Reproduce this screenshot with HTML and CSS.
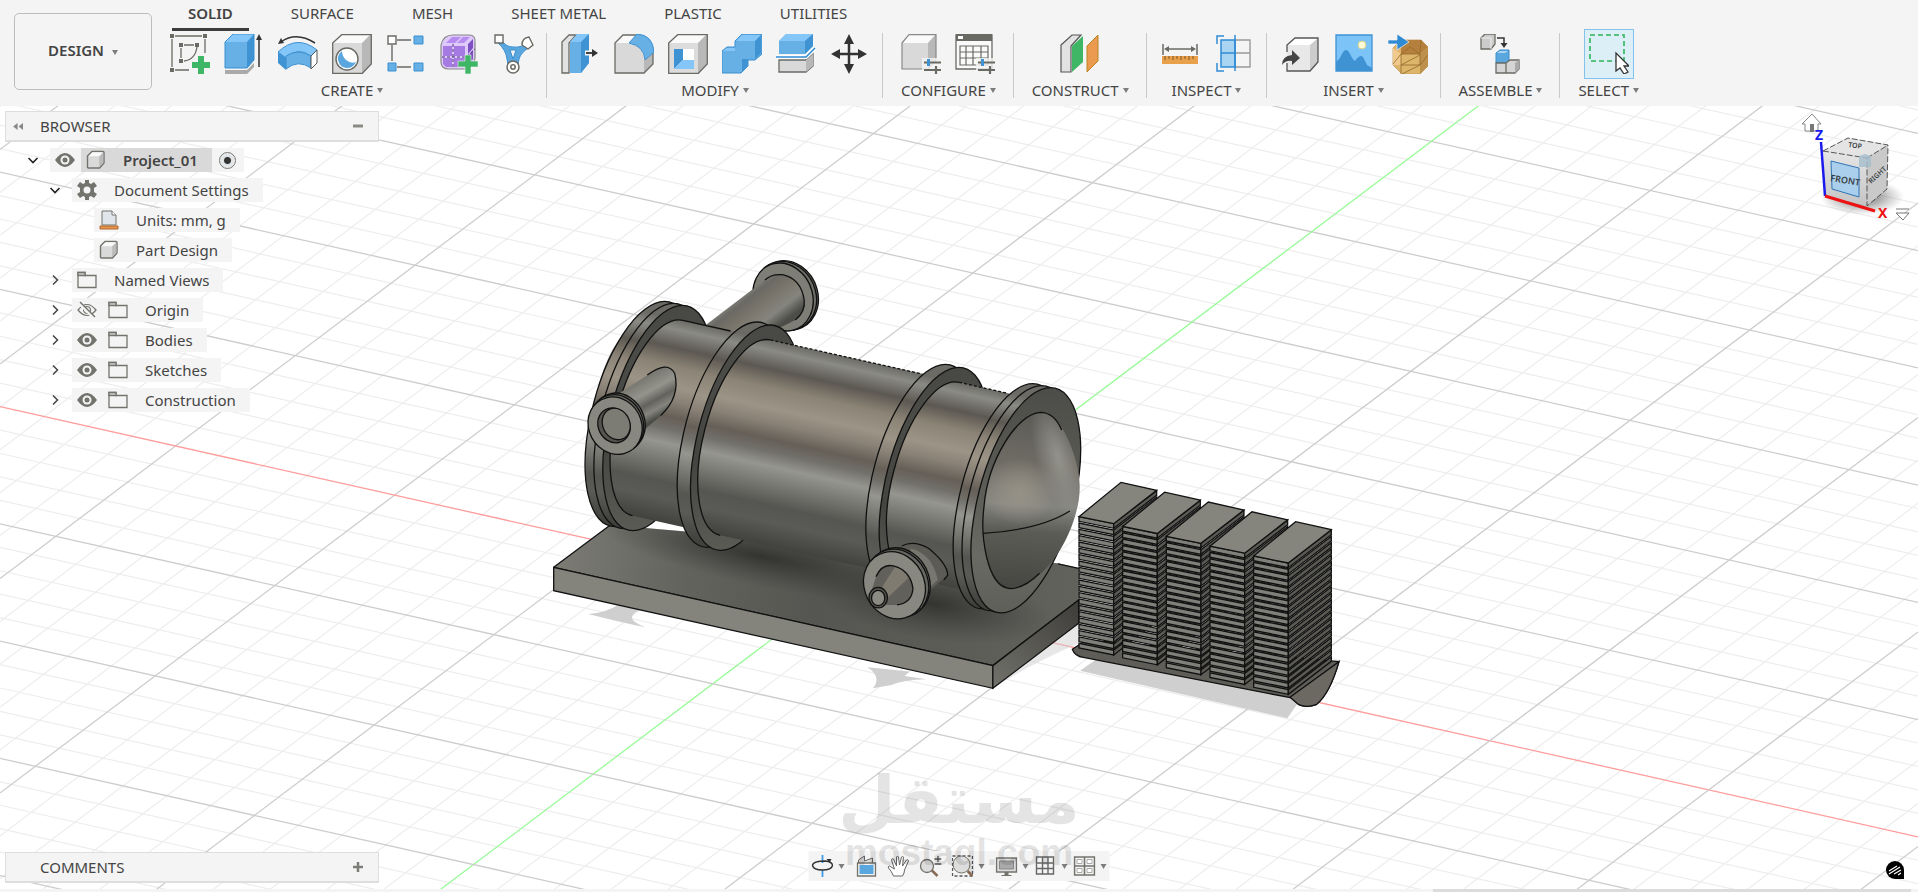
FILE: index.html
```html
<!DOCTYPE html>
<html lang="en">
<head>
    <meta charset="UTF-8">
    <meta name="viewport" content="width=device-width, initial-scale=1.0">
    <title>Project_01</title>
    <link rel="stylesheet" href="styles.css">
</head>
<body>
    <!-- Shared icons -->
    <svg class="defs" aria-hidden="true">
        <symbol id="i-eye" viewBox="0 0 20 20">
            <path d="M0 10 Q10-4 20 10 Q10 24 0 10z" fill="#73736d"/>
            <circle cx="10" cy="10" r="4.500" fill="#f4f4f4"/>
            <circle cx="10" cy="10" r="2.500" fill="#73736d"/>
        </symbol>
        <symbol id="i-eye-off" viewBox="0 0 20 20">
            <path d="M1 10 Q10-1 19 10 Q10 21 1 10z M10 6.500a3.500 3.500 0 1 0 .1 0z" fill="none" stroke="#73736d" stroke-width="1.200"/>
            <path d="M2 3L17 18" stroke="#f4f4f4" stroke-width="3"/>
            <path d="M3 2L18 17" stroke="#73736d" stroke-width="1.400"/>
        </symbol>
        <symbol id="i-folder" viewBox="0 0 20 18">
            <path d="M1 1.500h7v3h11v12H1z" fill="#f4f4f4" stroke="#73736d" stroke-width="1.300"/>
            <path d="M1 1.500h7v3H1z" fill="#ccc" stroke="#73736d" stroke-width="1.300"/>
        </symbol>
        <symbol id="i-part" viewBox="0 0 20 20">
            <path d="M1.500 6L6 1.500h11q1 0 1 1V13l-4.500 5h-11q-1 0-1-1z" fill="#d9d9d9" stroke="#73736d" stroke-width="1.400"/>
            <path d="M2.500 6.200L6.500 2.300H17L13 6.200z" fill="#fafafa"/>
            <path d="M13.200 6.500L17.300 2.800v10l-4.100 4.200z" fill="#bbb"/>
        </symbol>
        <symbol id="i-open" viewBox="0 0 12 12"><path d="M1.500 4L6 8.500 10.500 4" fill="none" stroke="#222" stroke-width="1.600"/></symbol>
        <symbol id="i-closed" viewBox="0 0 12 12"><path d="M4 1.500L8.500 6 4 10.500" fill="none" stroke="#444" stroke-width="1.500"/></symbol>
    </svg>

    <header class="toolbar">
        <button type="button" class="workspace">DESIGN <span class="arrow"></span></button>
        <div class="ribbon">
            <nav class="tabs">
                <button type="button" class="tab selected">SOLID</button>
                <button type="button" class="tab">SURFACE</button>
                <button type="button" class="tab">MESH</button>
                <button type="button" class="tab">SHEET METAL</button>
                <button type="button" class="tab">PLASTIC</button>
                <button type="button" class="tab">UTILITIES</button>
            </nav>
            <div class="groups">
                <section class="group">
                    <div class="tools">
                        <button type="button" class="tool" aria-label="Create Sketch"><svg viewBox="0 0 40 40">
                            <path d="M2 5v28M5 2h27M35 5v14M5 36h14M14 11h10M11 14v10M27 13Q25 26 14 27" fill="none" stroke="#6a6a64" stroke-width="1.300"/>
                            <path d="M0 0h4v4H0zM33 0h4v4h-4zM0 34h4v4H0zM9 9h4v4H9zM25 9h4v4h-4zM9 25h4v4H9z" fill="#6a6a64"/>
                            <path d="M28 22h6v6h6v6h-6v6h-6v-6h-6v-6h6z" fill="#3fb665"/>
                        </svg></button>
                        <button type="button" class="tool" aria-label="Extrude"><svg viewBox="0 0 40 40">
                            <path d="M1 36h22l7-7v4l-7 7H1z" fill="#aaa"/>
                            <path d="M1 8l8-8h21v26l-7 8H1z" fill="#84c6f8"/>
                            <path d="M1 8h22v26H1z" fill="#67b0e6"/>
                            <path d="M23 8l7-8v26l-7 8z" fill="#3f93d3"/>
                            <path d="M1 8l8-8h21v26l-7 8H1z" fill="none" stroke="#3b8fd0"/>
                            <path d="M35 4v29" stroke="#333" stroke-width="1.500"/><path d="M35 0l3 6h-6z" fill="#333"/>
                        </svg></button>
                        <button type="button" class="tool" aria-label="Revolve"><svg viewBox="0 0 40 40">
                            <path d="M0 18Q19 0 39 16l-6 6Q20 12 8 24z" fill="#84c6f8" stroke="#3b8fd0"/>
                            <path d="M8 22Q20 14 33 22v12Q20 25 8 35z" fill="#67b0e6" stroke="#3b8fd0"/>
                            <path d="M0 18l8 6v12l-8-7z" fill="#3f93d3"/>
                            <path d="M33 22l6-6v13l-6 6z" fill="#fff" stroke="#555"/>
                            <path d="M3 8Q18-3 37 9" fill="none" stroke="#333" stroke-width="1.500"/><path d="M0 10l3-6 3 5z" fill="#333"/>
                        </svg></button>
                        <button type="button" class="tool" aria-label="Hole"><svg viewBox="0 0 40 40">
                            <path d="M0 9l9-9h30v30l-9 9H0z" fill="#fafafa"/>
                            <path d="M1 9h29v30H1z" fill="#d9d9d9"/><path d="M30 9l9-9v30l-9 9z" fill="#b8b8b8"/>
                            <path d="M.7 9l9-8.300h29.600V30l-9 9.300H.7z" fill="none" stroke="#6a6a64" stroke-width="1.300"/>
                            <circle cx="15" cy="25" r="11" fill="#fff" stroke="#6a6a64" stroke-width="1.400"/>
                            <path d="M10 17Q5 21 6 26q2 8 9 8 6 0 9-6-5 2-10-2-4-4-4-9z" fill="#5aa7e0"/>
                        </svg></button>
                        <button type="button" class="tool" aria-label="Rectangular Pattern"><svg viewBox="0 0 40 40">
                            <path d="M11 6h14M11 33h14M6 11v16" stroke="#6a6a64" stroke-width="1.400"/>
                            <path d="M2 2h8v8H2z" fill="#fff" stroke="#6a6a64" stroke-width="1.400"/>
                            <path d="M28 2h9v8h-9zM2 29h8v8H2zM28 29h9v8h-9z" fill="#67b0e6" stroke="#3b8fd0"/>
                        </svg></button>
                        <button type="button" class="tool" aria-label="Create Form"><svg viewBox="0 0 40 40">
                            <path d="M1 11Q3 1 13 1H29Q36 1 35 9V24Q34 33 26 35H9Q1 35 1 28z" fill="#dfc9fb" stroke="#888" stroke-width="1.200"/>
                            <path d="M3 12h9v10H3zM14 12h11v10H14zM3 24h9v9H6l-3-3zM14 24h11v9H14z" fill="#a67ae3"/>
                            <path d="M6 9l6-6h9l-6 6zM17 9l6-6h7l-6 6z" fill="#b78cf0"/><path d="M28 10l5-5v9l-5 6zM28 22l5-6v9l-5 6z" fill="#7c4fc2"/>
                            <path d="M13 10v25M2 23h24l9-8" stroke="#4d367a" stroke-dasharray="3 2" fill="none"/>
                            <path d="M25 21h6v6h7v6h-7v7h-6v-7h-7v-6h7z" fill="#3fb665" stroke="#f4f4f4" stroke-width=".6"/>
                        </svg></button>
                        <button type="button" class="tool" aria-label="Automated Modeling"><svg viewBox="0 0 40 40">
                            <path d="M7 5Q11 13 19 13 29 14 33 8l3 5q-9 5-11 12l-2 11h-8l-2-11Q12 16 4 9z" fill="#5aa7e0" stroke="#3b8fd0"/>
                            <path d="M16 16h6l-3 9z" fill="#f4f4f4" stroke="#3b8fd0"/>
                            <path d="M1 1h8v8H1z" fill="#fff" stroke="#6a6a64" stroke-width="1.400"/>
                            <path d="M35 3l4 8-5 4-6-4q0-7 7-8z" fill="#fff" stroke="#6a6a64" stroke-width="1.400"/>
                            <circle cx="19" cy="33" r="6" fill="#fff" stroke="#6a6a64" stroke-width="1.500"/><circle cx="19" cy="33" r="2.200" fill="none" stroke="#6a6a64" stroke-width="1.500"/>
                        </svg></button>
                    </div>
                    <button type="button" class="label">CREATE <span class="arrow"></span></button>
                </section>
                <section class="group">
                    <div class="tools">
                        <button type="button" class="tool" aria-label="Press Pull"><svg viewBox="0 0 40 40">
                            <path d="M2 8l7-7h7l-7 8v30H2z" fill="#e2e2e2" stroke="#6a6a64" stroke-width="1.300"/>
                            <path d="M10 8l7-8h12v29l-8 10H10z" fill="#84c6f8"/><path d="M10 8h11v31H10z" fill="#67b0e6"/><path d="M21 8l8-8v29l-8 10z" fill="#3f93d3"/>
                            <path d="M25 19h9" stroke="#f4f4f4" stroke-width="5"/><path d="M26 19h8" stroke="#333" stroke-width="1.800"/><path d="M32 15l6 4-6 4z" fill="#333"/>
                        </svg></button>
                        <button type="button" class="tool" aria-label="Fillet"><svg viewBox="0 0 40 40">
                            <path d="M1 9l8-8h14l16 18v11l-9 9H1z" fill="#fafafa"/><path d="M1 9h12q17 1 17 17v13H1z" fill="#d9d9d9"/><path d="M30 26l9-7v11l-9 9z" fill="#b8b8b8"/>
                            <path d="M1 9l8-8h14l16 18v11l-9 9H1z" fill="none" stroke="#6a6a64" stroke-width="1.300"/>
                            <path d="M15 9l8-9Q39 1 40 18l-9 8Q30 12 15 9z" fill="#67b0e6" stroke="#3b8fd0"/>
                        </svg></button>
                        <button type="button" class="tool" aria-label="Shell"><svg viewBox="0 0 40 40">
                            <path d="M1 9l9-9h29v30l-9 9H1z" fill="#fafafa"/><path d="M1 9h29v30H1z" fill="#dcdcdc"/><path d="M30 9l9-9v30l-9 9z" fill="#b8b8b8"/>
                            <path d="M.7 9l9-8.300h29.600V30l-9 9.300H.7z" fill="none" stroke="#6a6a64" stroke-width="1.300"/>
                            <path d="M6 15h20v20H6z" fill="#fff"/><path d="M6 15h9v11l-9 9z" fill="#3f93d3"/><path d="M15 26h11v9H6z" fill="#84c6f8"/>
                        </svg></button>
                        <button type="button" class="tool" aria-label="Combine"><svg viewBox="0 0 40 40">
                            <path d="M0 17l5-4h8V7l7-7h20v20l-7 6h-7v6l-7 7H0z" fill="#67b0e6" stroke="#3b8fd0"/>
                            <path d="M14 7l6-6h19l-6 6zM1 17l4-3h8v3z" fill="#84c6f8"/><path d="M33 7l6-6v18l-6 6zM20 32V25h6v6l-6 7z" fill="#3f93d3"/>
                        </svg></button>
                        <button type="button" class="tool" aria-label="Split Body"><svg viewBox="0 0 40 40">
                            <path d="M3 7l7-7h27v12l-8 8H3z" fill="#67b0e6"/><path d="M3 7l7-7h27l-8 7z" fill="#84c6f8"/><path d="M29 7l8-7v12l-8 8z" fill="#3f93d3"/>
                            <path d="M3 26h27l7-6v12l-7 6H3z" fill="#d9d9d9" stroke="#6a6a64" stroke-width="1.300"/><path d="M30 26l7-6v12l-7 6z" fill="#b8b8b8"/>
                            <path d="M0 23h30l9-9" fill="none" stroke="#fff" stroke-width="4"/><path d="M0 23h30l9-9" fill="none" stroke="#2f8ad4" stroke-width="1.500"/>
                        </svg></button>
                        <button type="button" class="tool" aria-label="Move"><svg viewBox="0 0 40 40">
                            <path d="M19 5v30M4 20h30" stroke="#333" stroke-width="2.500"/>
                            <path d="M19 0l5 10H14zM19 40l5-10H14zM1 20l9-5v10zM37 20l-9-5v10z" fill="#333"/>
                        </svg></button>
                    </div>
                    <button type="button" class="label">MODIFY <span class="arrow"></span></button>
                </section>
                <section class="group">
                    <div class="tools">
                        <button type="button" class="tool" aria-label="Configure"><svg viewBox="0 0 40 40">
                            <path d="M1 8l7-8h27v26l-9 9H1z" fill="#fafafa"/><path d="M1 9h26v26H1z" fill="#d9d9d9"/><path d="M27 9l8-9v26l-8 9z" fill="#b8b8b8"/>
                            <path d="M1 9l7-8.300h27V26l-8 9H1z" fill="none" stroke="#888" stroke-width="1.200"/>
                            <path d="M21 24h20v16H21z" fill="#f4f4f4" opacity=".8"/><path d="M23 28.500h17M23 36h17M35 32v8" stroke="#6a6a64" stroke-width="2.200"/><path d="M27.500 25v7" stroke="#3f93d3" stroke-width="3"/>
                        </svg></button>
                        <button type="button" class="tool" aria-label="Configuration Table"><svg viewBox="0 0 40 40">
                            <path d="M1 1h36v34H1z" fill="#fafafa" stroke="#6a6a64" stroke-width="1.300"/><path d="M1 0h36v7H1z" fill="#6a6a64"/><path d="M3 2h5v3H3z" fill="#fff"/>
                            <path d="M5 12h28v19H5zM5 18h28M5 24h28M11 12v19M18 12v19M26 12v19" fill="none" stroke="#6a6a64" stroke-width="1.200"/>
                            <path d="M21 24h20v16H21z" fill="#f4f4f4" opacity=".8"/><path d="M23 28.500h17M23 36h17M35 32v8" stroke="#6a6a64" stroke-width="2.200"/><path d="M27.500 25v7" stroke="#3f93d3" stroke-width="3"/>
                        </svg></button>
                    </div>
                    <button type="button" class="label">CONFIGURE <span class="arrow"></span></button>
                </section>
                <section class="group">
                    <div class="tools">
                        <button type="button" class="tool" aria-label="Offset Plane"><svg viewBox="0 0 40 40">
                            <path d="M1 11L12 1h9L11 12v26H1z" fill="#e2e2e2" stroke="#555" stroke-width="1.200"/>
                            <path d="M12 12l11-10v26L12 38z" fill="#3fb665"/><path d="M27 12L38 1v26L27 38z" fill="#eb9a4f" stroke="#b98525"/>
                        </svg></button>
                    </div>
                    <button type="button" class="label">CONSTRUCT <span class="arrow"></span></button>
                </section>
                <section class="group">
                    <div class="tools">
                        <button type="button" class="tool" aria-label="Measure"><svg viewBox="0 0 40 40">
                            <path d="M3 10v11M37 10v11M6 15h28" stroke="#6a6a64" stroke-width="1.500"/><path d="M4 15l5-3v6zM36 15l-5-3v6z" fill="#6a6a64"/>
                            <path d="M2 22h36v8H2z" fill="#e8a04b"/><path d="M5 22v4M9 22v3M13 22v4M17 22v3M21 22v4M25 22v3M29 22v4M33 22v3" stroke="#7a5525"/>
                        </svg></button>
                        <button type="button" class="tool" aria-label="Section Analysis"><svg viewBox="0 0 40 40">
                            <path d="M21 6h15v27H21M21 19h15" fill="none" stroke="#999" stroke-width="1.400"/>
                            <path d="M7 6h14v27H7z" fill="#a9d4f2" stroke="#2f8ad4" stroke-width="1.500"/><path d="M7 19h14M21 1v36M10 2H3v8M10 37H3v-8" fill="none" stroke="#2f8ad4" stroke-width="1.500"/>
                        </svg></button>
                    </div>
                    <button type="button" class="label">INSPECT <span class="arrow"></span></button>
                </section>
                <section class="group">
                    <div class="tools">
                        <button type="button" class="tool" aria-label="Insert Derive"><svg viewBox="0 0 40 40">
                            <path d="M7 11l8-7h23v24l-8 9H7z" fill="#fff"/><path d="M7 11h23v26H7z" fill="#e8e8e8"/><path d="M30 11l8-7v24l-8 9z" fill="#ccc"/>
                            <path d="M7 18v-7l8-7h23v24l-8 9H7v-8" fill="none" stroke="#555" stroke-width="1.300"/>
                            <path d="M2 31Q2 22 12 21v-5l8 8-8 7v-4q-6-1-10 4z" fill="#444"/>
                        </svg></button>
                        <button type="button" class="tool" aria-label="Canvas"><svg viewBox="0 0 40 40">
                            <path d="M2 1h36v36H2z" fill="#7cc3f8"/><path d="M2 28Q6 25 8 20q4-8 8 0 3 6 5 7 5-7 8-4l4 8 5 3v3H2z" fill="#3f93d3"/>
                            <path d="M2 1h36v36H2z" fill="none" stroke="#3f93d3" stroke-width="1.300"/><circle cx="28" cy="11" r="4" fill="#fffbd5" stroke="#d8cf8e"/>
                        </svg></button>
                        <button type="button" class="tool" aria-label="Insert Mesh"><svg viewBox="0 0 40 40">
                            <path d="M5 14l8-8h20l7 7v19l-8 8H14l-9-9z" fill="#dcb46a" stroke="#c49a55" stroke-width=".8"/>
                            <path d="M13 6h20l7 7-8 7H13z" fill="#b5803d"/><path d="M32 20l8-7v19l-8 8z" fill="#bd904c"/>
                            <path d="M5 14l8 6v11l-8 0z" fill="#efc98e"/>
                            <path d="M13 20h19v11M13 20v20M13 31l19-10M13 31h19l-18 9M32 31l8-10M13 20l9-7 10 7 1-14M5 30l8-10" fill="none" stroke="#966829" stroke-width=".8"/>
                            <path d="M0 6h9V0l12 8-12 8v-6H0z" fill="#2f8ad4" stroke="#f4f4f4" stroke-width=".7"/>
                        </svg></button>
                    </div>
                    <button type="button" class="label">INSERT <span class="arrow"></span></button>
                </section>
                <section class="group">
                    <div class="tools">
                        <button type="button" class="tool" aria-label="New Component"><svg viewBox="0 0 40 40">
                            <path d="M1 4l4-4h10v10l-4 5H1z" fill="#ccc" stroke="#6a6a64" stroke-width="1.300"/><path d="M1 4h10v11" fill="none" stroke="#eee"/>
                            <path d="M17 4h7v7" fill="none" stroke="#333" stroke-width="1.500"/><path d="M20.500 9h7L24 14z" fill="#333"/>
                            <path d="M16 19l4-3h9v10l-3 3H16z" fill="#5aa7e0" stroke="#3b8fd0"/><path d="M17 19l3-2h8l-3 2z" fill="#a9d4f2"/>
                            <path d="M16 29h10v10H16zM26 29l4-3h9v9l-4 4h-9z" fill="#d5d5d5" stroke="#6a6a64" stroke-width="1.300"/><path d="M35 29l4-3v9l-4 4z" fill="#aaa"/>
                        </svg></button>
                    </div>
                    <button type="button" class="label">ASSEMBLE <span class="arrow"></span></button>
                </section>
                <section class="group">
                    <div class="tools">
                        <button type="button" class="tool active" aria-label="Select"><svg viewBox="0 0 40 40">
                            <path d="M1 1h34v26H1z" fill="none" stroke="#2fb35b" stroke-width="1.600" stroke-dasharray="5 3"/>
                            <path d="M27 19v18l4-3 4 6 4-2-4-6h5z" fill="#fff" stroke="#333" stroke-width="1.300"/>
                        </svg></button>
                    </div>
                    <button type="button" class="label">SELECT <span class="arrow"></span></button>
                </section>
            </div>
        </div>
    </header>

    <main class="viewport">
        <svg class="scene" viewBox="0 106 1918 783" preserveAspectRatio="xMidYMid slice">
            <defs>
                <linearGradient id="body" gradientUnits="userSpaceOnUse" x1="700" y1="319" x2="555" y2="904">
                    <stop offset="0" stop-color="#6b6a65"/><stop offset=".05" stop-color="#8b8b86"/><stop offset=".14" stop-color="#5c5852"/>
                    <stop offset=".23" stop-color="#8b8375"/><stop offset=".33" stop-color="#9c9486"/><stop offset=".4" stop-color="#898176"/>
                    <stop offset=".48" stop-color="#655f57"/><stop offset=".54" stop-color="#72706a"/><stop offset=".61" stop-color="#969690"/>
                    <stop offset=".69" stop-color="#7b7b76"/><stop offset=".8" stop-color="#555551"/><stop offset=".88" stop-color="#5a5a56"/><stop offset="1" stop-color="#41413e"/>
                </linearGradient>
                <linearGradient id="rim" href="#body" gradientUnits="userSpaceOnUse" x1="10" y1="-293" x2="-128" y2="295"/>
                <linearGradient id="face" x1="0" y1="0" x2="0" y2="1"><stop offset="0" stop-color="#484844"/><stop offset=".25" stop-color="#4b4b47"/><stop offset=".6" stop-color="#444440"/><stop offset="1" stop-color="#5b5b56"/></linearGradient>
                <linearGradient id="face-front" x1="0" y1="0" x2="0" y2="1"><stop offset="0" stop-color="#4c4c48"/><stop offset=".4" stop-color="#5b5b56"/><stop offset=".75" stop-color="#6a6a65"/><stop offset="1" stop-color="#5f5f5a"/></linearGradient>
                <linearGradient id="pipe" gradientUnits="userSpaceOnUse" x1="525" y1="170" x2="620" y2="280"><stop offset="0" stop-color="#8a8a83"/><stop offset=".2" stop-color="#6a6963"/><stop offset=".45" stop-color="#7a756b"/><stop offset=".75" stop-color="#85857e"/><stop offset="1" stop-color="#4c4c48"/></linearGradient>
                <linearGradient id="pipe2" gradientUnits="userSpaceOnUse" x1="260" y1="425" x2="325" y2="530"><stop offset="0" stop-color="#77776f"/><stop offset=".35" stop-color="#94948c"/><stop offset=".6" stop-color="#64625c"/><stop offset=".8" stop-color="#85857e"/><stop offset="1" stop-color="#4b4b47"/></linearGradient>
                <linearGradient id="plate" gradientUnits="userSpaceOnUse" x1="37" y1="982" x2="1456" y2="1100"><stop offset="0" stop-color="#7c7c75"/><stop offset=".25" stop-color="#63635e"/><stop offset=".5" stop-color="#555551"/><stop offset="1" stop-color="#62625d"/></linearGradient>
                <linearGradient id="side" x1="0" y1="1" x2="1" y2="0"><stop offset="0" stop-color="#72726b"/><stop offset="1" stop-color="#3d3c39"/></linearGradient>
                <linearGradient id="dome" gradientUnits="userSpaceOnUse" x1="1300" y1="517" x2="1260" y2="1046"><stop offset="0" stop-color="#5b5a55"/><stop offset=".3" stop-color="#706d66"/><stop offset=".52" stop-color="#85857f"/><stop offset=".67" stop-color="#5c5c57"/><stop offset="1" stop-color="#454541"/></linearGradient>
                <radialGradient id="dark"><stop offset="0" stop-color="#262624" stop-opacity=".75"/><stop offset="1" stop-color="#333" stop-opacity="0"/></radialGradient>
                <radialGradient id="shine"><stop offset="0" stop-color="#a09a8c" stop-opacity=".7"/><stop offset="1" stop-color="#a8a294" stop-opacity="0"/></radialGradient>
                <radialGradient id="shine2"><stop offset="0" stop-color="#a0a099" stop-opacity=".75"/><stop offset="1" stop-color="#a0a099" stop-opacity="0"/></radialGradient>
                <clipPath id="plate-clip"><path d="M37 982L190 855 1400 970 1456 985V1085L1224 1277z"/></clipPath>
                <clipPath id="dome-clip"><path d="M1365 517C1405 522 1458 650 1459 740C1459 850 1380 1040 1261 1046C1205 1038 1190 880 1200 800C1215 660 1290 517 1365 517z"/></clipPath>
            </defs>
            <g id="grid"></g>

            <!-- Tank on its base plate -->
            <g class="model" transform="translate(540 240) scale(.37 .3333)">
                <path d="M130 1122Q180 1118 210 1095L270 1110Q220 1135 285 1162Q230 1150 130 1122zM885 1282L1000 1295 985 1308 1045 1318Q980 1320 950 1335L900 1345Q925 1310 885 1282z" class="shadow"/>
                <path d="M1224 1345L1456 1150V1210Q1330 1270 1224 1345z" class="shadow" opacity=".5"/>
                <path d="M37 982L190 855 1400 970 1456 985V1085L1224 1277z" fill="url(#plate)"/>
                <g clip-path="url(#plate-clip)">
                    <ellipse cx="600" cy="950" rx="460" ry="90" transform="rotate(13 600 950)" fill="url(#dark)"/>
                    <ellipse cx="1060" cy="1090" rx="330" ry="110" transform="rotate(10 1060 1090)" fill="url(#dark)"/>
                </g>
                <path d="M37 982L190 855M37 982L1224 1277 1456 1080M1400 972L1456 985" class="edge"/>
                <path d="M37 982L1224 1277V1345L37 1052z" fill="#84847d" class="line"/>
                <path d="M1224 1277L1456 1080V1150L1224 1345z" fill="url(#side)" class="line"/>

                <!-- Rear pipe -->
                <g class="line">
                    <ellipse cx="668" cy="166" rx="83" ry="105" transform="rotate(-14 668 166)" fill="#55554f"/>
                    <ellipse cx="663" cy="168" rx="83" ry="105" transform="rotate(-14 663 168)" fill="#6e6e68"/>
                    <ellipse cx="657" cy="171" rx="80" ry="103" transform="rotate(-14 657 171)" fill="#7e7e77"/>
                </g>
                <path d="M440 262L598 128Q625 100 655 104Q705 115 714 180Q718 215 690 240L600 290z" fill="url(#pipe)"/>
                <path d="M608 120Q625 101 655 104Q705 115 714 180Q718 215 690 240" class="edge"/>

                <!-- Left flange -->
                <ellipse cx="245" cy="516" rx="100" ry="265" transform="rotate(8 245 516)" fill="#777771"/>
                <g class="line">
                    <ellipse rx="132" ry="338" transform="matrix(1 0 -.198 1 270 522)" class="rim"/>
                    <ellipse rx="132" ry="338" transform="matrix(1 0 -.198 1 294 528)" class="rim"/>
                    <ellipse rx="132" ry="338" transform="matrix(1 0 -.198 1 318 534)" fill="url(#face)"/>
                </g>
                <path d="M640 304L386 241c-60-15-139 104-177 266c-38 162-19 305 41 320L504 890z" fill="url(#body)"/>
                <path d="M515 273L386 241c-60-15-139 104-177 266c-38 162-19 305 41 320" class="edge"/>

                <!-- Second ring -->
                <g class="line">
                    <ellipse rx="132" ry="338" transform="matrix(1 0 -.198 1 519 584)" class="rim"/>
                    <ellipse rx="132" ry="338" transform="matrix(1 0 -.198 1 555 593)" fill="url(#face)"/>
                </g>
                <path d="M1133 426L623 300c-60-15-139 104-177 266c-38 162-19 305 41 320L997 1012z" fill="url(#body)"/>
                <path d="M623 300c-60-15-139 104-177 266c-38 162-19 305 41 320" class="edge"/>
                <path d="M623 300L1033 402" class="edge dotted"/>

                <!-- Third ring -->
                <g class="line">
                    <ellipse rx="132" ry="338" transform="matrix(1 0 -.198 1 1029 711)" class="rim"/>
                    <ellipse rx="132" ry="338" transform="matrix(1 0 -.198 1 1065 720)" fill="url(#face)"/>
                </g>
                <path d="M1375 487L1133 427c-60-15-139 104-177 266c-38 162-19 305 41 320L1239 1073z" fill="url(#body)"/>
                <path d="M1133 427c-60-15-139 104-177 266c-38 162-19 305 41 320" class="edge"/>
                <path d="M1133 427L1260 459" class="edge dotted"/>

                <!-- Right flange and dome -->
                <g class="line">
                    <ellipse rx="132" ry="338" transform="matrix(1 0 -.198 1 1265 769)" class="rim"/>
                    <ellipse rx="132" ry="338" transform="matrix(1 0 -.198 1 1289 775)" class="rim"/>
                    <ellipse rx="132" ry="338" transform="matrix(1 0 -.198 1 1313 781)" fill="url(#face-front)"/>
                </g>
                <g clip-path="url(#dome-clip)">
                    <path d="M1180 500H1470V1060H1180z" fill="url(#dome)"/>
                    <ellipse cx="1400" cy="650" rx="60" ry="190" transform="rotate(-14 1400 650)" fill="url(#shine2)"/>
                    <ellipse cx="1295" cy="755" rx="100" ry="100" fill="url(#shine)"/>
                </g>
                <path d="M1410 570Q1390 517 1352 517C1290 520 1210 660 1200 800C1190 880 1205 1038 1270 1046Q1310 1045 1350 1000M1198 880Q1350 870 1432 813" class="edge"/>

                <!-- Left nozzle -->
                <path d="M200 470L300 398Q345 360 364 400Q380 470 326 527L260 590z" fill="url(#pipe2)"/>
                <path d="M290 405Q345 360 364 400Q380 470 326 527" class="edge"/>
                <g class="line">
                    <ellipse cx="213" cy="546" rx="70" ry="88" transform="rotate(-16 213 546)" fill="#666660"/>
                    <ellipse cx="208" cy="551" rx="71" ry="88" transform="rotate(-16 208 551)" fill="#666660"/>
                    <ellipse cx="203" cy="557" rx="72" ry="87" transform="rotate(-16 203 557)" fill="#888881"/>
                    <ellipse cx="200" cy="556" rx="43" ry="53" transform="rotate(-16 200 556)" fill="#55544f"/>
                    <ellipse cx="206" cy="552" rx="37" ry="48" transform="rotate(-16 206 552)" fill="#7c7b74"/>
                </g>

                <!-- Drain nozzle -->
                <path d="M975 918Q1010 900 1050 925Q1100 970 1102 1005L1040 1065z" fill="#5c5b56"/>
                <path d="M1000 925Q1060 940 1075 1020L1040 1055z" fill="#77776f"/>
                <path d="M978 918Q1010 900 1050 925Q1100 970 1102 1005L1092 1020" class="edge"/>
                <g class="line">
                    <ellipse cx="971" cy="1026" rx="82" ry="104" transform="rotate(-16 971 1026)" fill="#666660"/>
                    <ellipse cx="966" cy="1030" rx="83" ry="104" transform="rotate(-16 966 1030)" fill="#666660"/>
                    <ellipse cx="958" cy="1036" rx="82" ry="102" transform="rotate(-16 958 1036)" fill="#888881"/>
                </g>
                <path d="M898 1045L910 1005Q925 970 955 978Q1000 990 1008 1045Q1005 1090 965 1095L935 1095z" fill="#62605a"/>
                <path d="M925 1040L960 980Q985 985 995 1015L938 1075z" fill="#7f7b70"/>
                <path d="M908 1010Q925 970 955 978Q1000 990 1008 1045Q1005 1090 965 1095" class="edge"/>
                <ellipse cx="914" cy="1073" rx="25" ry="31" fill="#55544f" class="line"/>
                <ellipse cx="914" cy="1074" rx="18" ry="23" fill="#8b8b84" class="line"/>
            </g>

            <!-- Plate stacks in their tray -->
            <g class="model" transform="translate(1040 460) scale(.3333)">
                <path d="M120 632L180 590 780 720 742 775z" class="shadow"/>
                <path d="M97 568L140 540 897 605Q870 700 830 733Q800 745 775 733L755 714 130 592Q105 590 97 568z" fill="#5e5d57" class="line"/>
                <g id="stacks"></g>
                <path d="M750 712L897 605Q870 700 830 733Q800 745 775 733z" fill="#6b6962" class="line"/>
            </g>
        </svg>

        <aside class="browser">
            <div class="panel">
                <button type="button" class="collapse" aria-label="Collapse"><svg viewBox="0 0 12 10"><path d="M5 1v8L0 5zM11 1v8L6 5z" fill="#888"/></svg></button>
                <h2>BROWSER</h2>
                <button type="button" class="panel-btn" aria-label="Minimize"><svg viewBox="0 0 12 12"><path d="M1 6h10" stroke="#8a8a84" stroke-width="3"/></svg></button>
            </div>
            <ul class="tree">
                <li class="level-0">
                    <svg class="toggle"><use href="#i-open"/></svg>
                    <div class="chip">
                        <svg class="cell"><use href="#i-eye"/></svg>
                        <div class="chosen"><svg class="cell"><use href="#i-part"/></svg><span>Project_01</span></div>
                        <label class="activate"><input type="radio" name="active" checked aria-label="Activate Project_01"></label>
                    </div>
                </li>
                <li class="level-1">
                    <svg class="toggle"><use href="#i-open"/></svg>
                    <div class="chip">
                        <svg class="cell" viewBox="0 0 20 20"><path d="M8 0h4v3l2 1 3-2 3 4-3 2v4l3 2-3 4-3-2-2 1v3H8v-3l-2-1-3 2-3-4 3-2V8L0 6l3-4 3 2 2-1z" fill="#73736d"/><circle cx="10" cy="10" r="3.500" fill="#f4f4f4"/></svg>
                        <span>Document Settings</span>
                    </div>
                </li>
                <li class="level-2">
                    <div class="chip">
                        <svg class="cell" viewBox="0 0 20 20"><path d="M3 15V1h10l4 4v10z" fill="#dfe5ea" stroke="#73736d"/><path d="M13 1v4h4" fill="#fff" stroke="#73736d"/><path d="M1 16h18v3H1z" fill="#e8964a" stroke="#b0672a"/></svg>
                        <span>Units: mm, g</span>
                    </div>
                </li>
                <li class="level-2"><div class="chip"><svg class="cell"><use href="#i-part"/></svg><span>Part Design</span></div></li>
                <li class="level-1"><svg class="toggle"><use href="#i-closed"/></svg><div class="chip"><svg class="cell"><use href="#i-folder"/></svg><span>Named Views</span></div></li>
                <li class="level-1"><svg class="toggle"><use href="#i-closed"/></svg><div class="chip"><svg class="cell"><use href="#i-eye-off"/></svg><svg class="cell"><use href="#i-folder"/></svg><span>Origin</span></div></li>
                <li class="level-1"><svg class="toggle"><use href="#i-closed"/></svg><div class="chip"><svg class="cell"><use href="#i-eye"/></svg><svg class="cell"><use href="#i-folder"/></svg><span>Bodies</span></div></li>
                <li class="level-1"><svg class="toggle"><use href="#i-closed"/></svg><div class="chip"><svg class="cell"><use href="#i-eye"/></svg><svg class="cell"><use href="#i-folder"/></svg><span>Sketches</span></div></li>
                <li class="level-1"><svg class="toggle"><use href="#i-closed"/></svg><div class="chip"><svg class="cell"><use href="#i-eye"/></svg><svg class="cell"><use href="#i-folder"/></svg><span>Construction</span></div></li>
            </ul>
        </aside>

        <svg class="viewcube" viewBox="1798 106 120 124">
            <defs>
                <radialGradient id="cube-shadow"><stop offset="0" stop-color="#444" stop-opacity=".9"/><stop offset="1" stop-color="#777" stop-opacity="0"/></radialGradient>
                <linearGradient id="cube-front" x1="0" y1="0" x2="0" y2="1"><stop offset="0" stop-color="#e6e6e6"/><stop offset="1" stop-color="#c4c4c4"/></linearGradient>
            </defs>
            <ellipse cx="1862" cy="197" rx="42" ry="18" fill="url(#cube-shadow)"/>
            <path d="M1802 124l10-10 9 10h-3v7h-13v-7z" fill="#fff" stroke="#888"/><path d="M1810 124h4v8h-4z" fill="#777"/>
            <path d="M1823 151l25-13 40 7-21 13z" fill="#e4e4e4"/>
            <path d="M1823 151l44 7v48l-42-10z" fill="url(#cube-front)"/>
            <path d="M1867 158l21-13-1 44-20 17z" fill="#c9c9c9"/>
            <path d="M1823 151l25-13 40 7-1 44-20 17M1823 151l44 7v48M1867 158l21-13" fill="none" stroke="#555" stroke-dasharray="6 2"/>
            <path d="M1831 161l28 7v29l-27-8z" fill="#a9cfec" stroke="#2f74b5"/>
            <path d="M1859 156l6-2 6 2v11h-12z" fill="#a8bfcc" opacity=".85"/>
            <text x="1830" y="181" transform="rotate(9 1830 181)" class="cube-name">FRONT</text>
            <text x="1848" y="147" transform="rotate(8 1848 147)" class="cube-name small">TOP</text>
            <text x="1871" y="184" transform="rotate(-42 1871 184)" class="cube-name small">RIGHT</text>
            <path d="M1821 142l4 54" stroke="#1a1aee" stroke-width="2.500"/>
            <path d="M1825 196l50 15" stroke="#ee1111" stroke-width="3"/>
            <text x="1815" y="140" class="axis-z">Z</text>
            <text x="1878" y="218" class="axis-x">X</text>
            <path d="M1896 209h13M1896 213h13l-6 7z" fill="#fff" stroke="#777"/>
        </svg>

        <div class="comments panel">
            <h2>COMMENTS</h2>
            <button type="button" class="panel-btn" aria-label="Add comment"><svg viewBox="0 0 12 12"><path d="M1 6h10M6 1v10" stroke="#7d7d77" stroke-width="2.500"/></svg></button>
        </div>

        <div class="navbar">
            <button type="button" class="nav" aria-label="Orbit"><svg viewBox="0 0 22 22"><path d="M11 0v8M11 15v7" stroke="#3f9be6" stroke-width="1.800"/><path d="M14 6Q21 7 21 10.500 20 15 11 15 2 15 1 10.500 1 6 14 6" fill="none" stroke="#333" stroke-width="1.400"/><path d="M15 4h5l-2 4z" fill="#333"/></svg></button>
            <button type="button" class="drop" aria-label="Orbit options"><span class="arrow"></span></button>
            <button type="button" class="nav spaced" aria-label="Look At"><svg viewBox="0 0 22 22"><path d="M3 8V5l6-4v5l8-3v5" fill="#ddd" stroke="#666"/><path d="M2 8h18v13H2z" fill="#f4f4f4" stroke="#73736d" stroke-width="1.300"/><path d="M4 10h14v9H4z" fill="#5aa7e0"/></svg></button>
            <button type="button" class="nav spaced" aria-label="Pan"><svg viewBox="0 0 22 22"><path d="M6 21Q4 16 1 13q-1-2 1-2l5 3L4 5q0-2 2-1l3 7L9 2q1-2 2 0l1 8 2-8q1-1 2 0l-1 9 4-6q2-1 2 1l-4 9q0 3-2 6z" fill="#fff" stroke="#666"/></svg></button>
            <button type="button" class="nav spaced" aria-label="Zoom"><svg viewBox="0 0 22 22"><path d="M12 15l6 6" stroke="#8a6a55" stroke-width="2.500"/><circle cx="7.500" cy="11" r="6.500" fill="#ddd" stroke="#73736d" stroke-width="1.300"/><path d="M15 4h7M18.500 1v6M15 9h7" stroke="#555" stroke-width="1.300"/></svg></button>
            <button type="button" class="nav spaced" aria-label="Zoom Window"><svg viewBox="0 0 22 22"><path d="M1 1h20v20H1z" fill="none" stroke="#555" stroke-dasharray="3 2" stroke-width="1.300"/><path d="M16 16l5 5" stroke="#8a6a55" stroke-width="2.500"/><circle cx="10" cy="9.500" r="8.500" fill="#ddd" stroke="#73736d"/></svg></button>
            <button type="button" class="drop" aria-label="Zoom options"><span class="arrow"></span></button>
            <button type="button" class="nav spaced" aria-label="Display Settings"><svg viewBox="0 0 22 22"><path d="M1 3h20v14H1z" fill="#ddd" stroke="#73736d" stroke-width="1.400"/><path d="M4 6h14v8H4z" fill="#aaa" stroke="#888"/><path d="M9 17h4v3h3v1H6v-1h3z" fill="#73736d"/></svg></button>
            <button type="button" class="drop" aria-label="Display options"><span class="arrow"></span></button>
            <button type="button" class="nav" aria-label="Grid and Snaps"><svg viewBox="0 0 22 22"><path d="M2 2h17v17H2zM8 2v17M13.500 2v17M2 8h17M2 13.500h17" fill="none" stroke="#666" stroke-width="1.400"/></svg></button>
            <button type="button" class="drop" aria-label="Grid options"><span class="arrow"></span></button>
            <button type="button" class="nav" aria-label="Viewports"><svg viewBox="0 0 22 22"><path d="M1 2h20v18H1zM11 2v18M1 11h20" fill="none" stroke="#73736d" stroke-width="1.600"/><path d="M3.500 4.500h5v4h-5zM13.500 4.500h5v4h-5zM3.500 13.500h5v4h-5zM13.500 13.500h5v4h-5z" fill="#fff" stroke="#aaa"/></svg></button>
            <button type="button" class="drop" aria-label="Viewport options"><span class="arrow"></span></button>
        </div>

        <button type="button" class="assistant" aria-label="Assistant"><svg viewBox="0 0 18 18"><path d="M9 0a9 9 0 0 1 9 9v9H9A9 9 0 0 1 9 0z" fill="#000"/><path d="M3 10l8-5M3 13L14 6M8 13l7-4M12 14l3-2" stroke="#fff" stroke-width="1.200"/></svg></button>

        <div class="watermark">
            <span class="mark-ar" lang="ar">مستقل</span>
            <span class="mark-en">mostaql.com</span>
        </div>
    </main>
    <div class="scrollbar"><div class="thumb"></div></div>

    <script src="scene.js"></script>
</body>
</html>
```
FILE: styles.css
```css
* {
    box-sizing: border-box;
}
body {
    margin: 0;
    height: 100vh;
    display: flex;
    flex-direction: column;
    overflow: hidden;
    background-color: #f4f4f4;
    color: #444;
    font-family: "Noto Sans", sans-serif;
    font-size: 15px;
}
button {
    padding: 0;
    border: none;
    background: none;
    color: inherit;
    font: inherit;
    cursor: pointer;
}
svg {
    display: block;
}
.defs {
    position: absolute;
    width: 0;
    height: 0;
}
.arrow {
    display: inline-block;
    border: 3px solid transparent;
    border-top: 5px solid #7d7d7d;
    border-bottom: none;
}

/* Toolbar */
.toolbar {
    display: flex;
    flex: none;
    height: 106px;
    padding-left: 14px;
    gap: 5px;
}
.workspace {
    width: 138px;
    height: 77px;
    margin-top: 13px;
    padding-bottom: 4px;
    border: 1px solid #bdbdbd;
    border-radius: 5px;
    font-weight: 600;
}
.workspace .arrow {
    margin-left: 4px;
    vertical-align: 1px;
}
.tabs {
    display: flex;
    gap: 26px;
    height: 31px;
    padding-left: 15px;
}
.tab {
    padding: 0 16px 2px;
    border-bottom: 3px solid transparent;
    white-space: nowrap;
}
.tab.selected {
    border-bottom-color: #3c3c3c;
    font-weight: 600;
}
.groups {
    display: flex;
    margin-top: 2px;
}
.group {
    display: flex;
    flex-direction: column;
    align-items: center;
    height: 65px;
    padding: 1px 12px 0 13px;
    border-right: 1px solid #c9c9c9;
}
.group:last-child {
    border-right: none;
}
.tools {
    display: flex;
    flex: none;
    gap: 14px;
    height: 40px;
}
.tool svg {
    width: 40px;
    height: 40px;
}
.tool.active {
    width: 50px;
    height: 50px;
    margin: -5px;
    padding: 4px;
    border: 1px solid #84c2ee;
    background-color: #dceef6;
}
.label {
    flex: none;
    height: 32px;
    padding: 0 5px;
    white-space: nowrap;
}
.label .arrow {
    vertical-align: 3px;
}

/* Viewport */
.viewport {
    position: relative;
    flex: 1;
    min-height: 0;
    overflow: hidden;
    background-color: #fff;
}
.scene {
    position: absolute;
    width: 100%;
    height: 100%;
}
.minor {
    stroke: #ededed;
    stroke-width: 1.2;
}
.major {
    stroke: #cdcdcd;
    stroke-width: 1.3;
}
.axis-red {
    stroke: #ff9c9c;
    stroke-width: 1.3;
}
.axis-green {
    stroke: #98fb98;
    stroke-width: 1.3;
}
.model * {
    vector-effect: non-scaling-stroke;
}
.line, .edge {
    stroke: #111;
    stroke-width: 1.3;
}
.edge {
    fill: none;
}
.dotted {
    stroke-dasharray: 3 2;
}
.rim {
    fill: url(#rim);
}
.shadow {
    fill: #cfcfcf;
}
.slab-front {
    fill: #80807a;
}
.slab-side {
    fill: #5b5a55;
}
.slab-top {
    fill: #85857e;
}

/* Panels */
.panel {
    display: flex;
    align-items: center;
    width: 374px;
    height: 31px;
    padding: 0 14px 0 7px;
    border: 1px solid #dedede;
    border-bottom-width: 2px;
    background-color: #f4f4f4;
}
.panel h2 {
    flex: 1;
    margin: 0;
    font-size: 15px;
    font-weight: 400;
}
.panel-btn svg {
    width: 12px;
    height: 12px;
}
.collapse {
    width: 27px;
}
.collapse svg {
    width: 11px;
    height: 9px;
}
.browser {
    position: absolute;
    top: 5px;
    left: 5px;
}
.comments {
    position: absolute;
    left: 5px;
    bottom: 6px;
    padding-left: 34px;
}
.tree {
    margin: 3px 0 0;
    padding: 0;
    list-style: none;
}
.tree li {
    display: flex;
    align-items: center;
    height: 30px;
}
.level-0 {
    padding-left: 22px;
}
.level-1 {
    padding-left: 44px;
}
.level-2 {
    padding-left: 89px;
}
.toggle {
    width: 12px;
    height: 12px;
    margin-right: 11px;
}
.chip, .chosen {
    display: flex;
    align-items: center;
    height: 24px;
    background-color: #f4f4f4;
}
.chip span {
    padding: 0 14px 0 11px;
}
.chosen {
    background-color: #d9d9d9;
    font-weight: 600;
}
.cell {
    width: 20px;
    height: 20px;
    margin: 0 6px 0 5px;
}
.activate {
    width: 32px;
    display: flex;
    justify-content: center;
}
.activate input {
    appearance: none;
    width: 17px;
    height: 17px;
    margin: 0;
    border: 1px solid #777;
    border-radius: 50%;
    background: radial-gradient(circle, #333 3px, #dde3e6 4px, #eee 8px);
}

/* View cube */
.viewcube {
    position: absolute;
    top: 0;
    right: 0;
    width: 120px;
    height: 124px;
}
.cube-name {
    font-size: 9px;
    font-weight: 600;
    fill: #3a3f44;
}
.cube-name.small {
    font-size: 7px;
}
.axis-z, .axis-x {
    font-size: 14px;
    font-weight: 700;
    fill: #1a1aee;
}
.axis-x {
    fill: #ee1111;
}

/* Navigation bar */
.navbar {
    position: absolute;
    left: 50%;
    bottom: 8px;
    display: flex;
    height: 30px;
    background-color: #f4f4f4;
    transform: translateX(-50%);
}
.nav {
    width: 27px;
    display: flex;
    align-items: center;
    justify-content: center;
}
.nav svg {
    width: 22px;
    height: 22px;
}
.spaced {
    margin-left: 5px;
}
.drop {
    width: 12px;
}
.navbar .drop .arrow {
    vertical-align: 3px;
}
.assistant {
    position: absolute;
    right: 14px;
    bottom: 10px;
}
.assistant svg {
    width: 18px;
    height: 18px;
}

.watermark {
    position: absolute;
    left: 50%;
    bottom: 18px;
    display: flex;
    flex-direction: column;
    align-items: center;
    color: #000;
    opacity: .1;
    line-height: 1;
    pointer-events: none;
    transform: translateX(-50%);
}
.mark-ar {
    font-family: "DejaVu Sans", sans-serif;
    font-size: 66px;
    font-weight: 700;
}
.mark-en {
    font-family: "Liberation Sans", sans-serif;
    font-size: 37px;
    font-weight: 700;
}

.scrollbar {
    display: flex;
    flex: none;
    justify-content: flex-end;
    height: 3px;
    padding-right: 7px;
}
.thumb {
    width: 25%;
    background-color: #dcdcdc;
}
```
FILE: scene.js
```js
const NS = "http://www.w3.org/2000/svg";

function add(parent, tag, attrs) {
    const el = document.createElementNS(NS, tag);
    for (const key in attrs) el.setAttribute(key, attrs[key]);
    parent.appendChild(el);
}

// Ground grid, five cells between two main lines
const grid = document.getElementById("grid");
const slopeX = 0.2243, slopeY = -0.755;

function gridLine(y0, slope, cls) {
    add(grid, "line", { x1: 0, y1: y0, x2: 1918, y2: y0 + slope * 1918, class: cls });
}

function gridPass(main) {
    for (let i = -40; i <= 40; i++) {
        if ((i % 5 === 0) !== main) continue;
        const cls = main ? "major" : "minor";
        gridLine(406.6 + i * 23.45, slopeX, i === 0 ? "axis-red" : cls);
        gridLine(1222 + i * 42.9, slopeY, i === 0 ? "axis-green" : cls);
    }
}
gridPass(false);
gridPass(true);

// Stacked plates
const stacks = document.getElementById("stacks");
for (let s = 0; s < 5; s++) {
    const x = 117 + s * 131, y = 170 + s * 29.5;
    for (let n = 20; n >= 0; n--) {
        const t = y + n * 19;
        add(stacks, "path", { d: `M${x} ${t}l104 21v14l-104-21z`, class: "slab-front line" });
        add(stacks, "path", { d: `M${x + 104} ${t + 21}l129-99v14l-129 99z`, class: "slab-side line" });
    }
    add(stacks, "path", { d: `M${x} ${y}l126-103 107 24-129 100z`, class: "slab-top line" });
}
```
